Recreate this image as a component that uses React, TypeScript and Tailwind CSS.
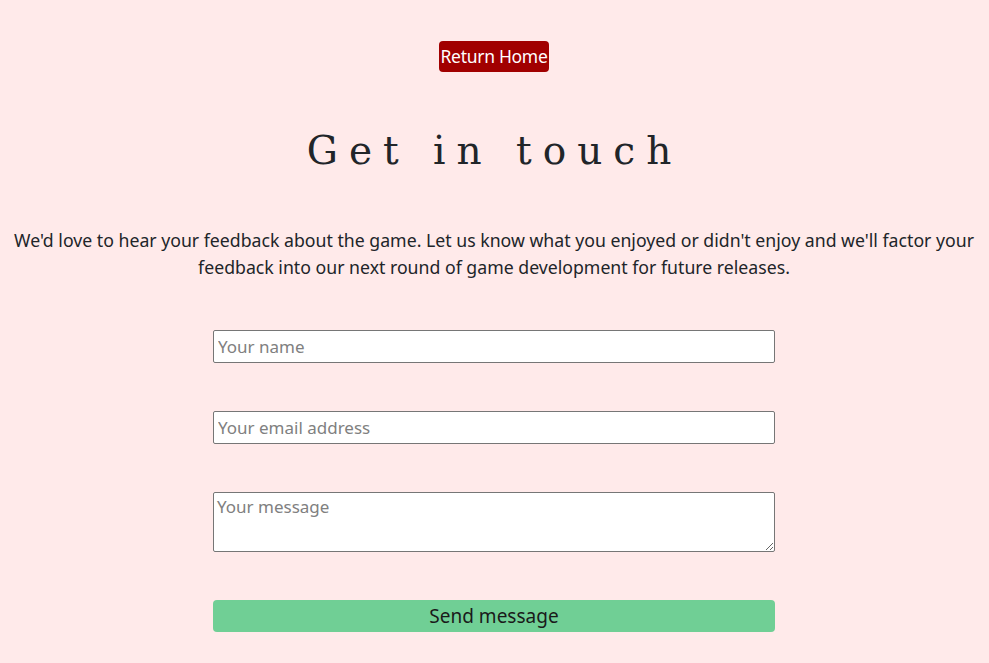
export default function App() {
  const fields = [
    { type: "text", placeholder: "Your name" },
    { type: "email", placeholder: "Your email address" },
  ];

  return (
    <div className="min-h-screen w-full bg-[#ffeaea] text-[#212529] font-['Noto_Sans',sans-serif]">
      <div className="flex flex-col items-center pt-[41px] pr-[1px]">
        <a
          href="#"
          className="rounded-[4px] bg-[#a10000] px-[2px] h-[31px] flex items-center text-[17.5px] text-white tracking-[-0.3px]"
        >
          Return Home
        </a>

        <h1 className="mt-[53px] text-[39px] leading-[52px] tracking-[11px] font-['DejaVu_Serif',serif] font-normal pl-[1px]">
          Get in touch
        </h1>

        <p className="mt-[50px] px-[10px] text-center text-[17.7px] leading-[27px]">
          We'd love to hear your feedback about the game. Let us know what you
          enjoyed or didn't enjoy and we'll factor your feedback into our next
          round of game development for future releases.
        </p>

        <form className="mt-[49px] w-[562px] flex flex-col gap-[48px]">
          {fields.map((f, i) => (
            <input
              key={i}
              type={f.type}
              placeholder={f.placeholder}
              className="h-[33px] w-full bg-white border border-[#767676] rounded-[2px] px-[4px] text-[17px] placeholder:text-[#808080] outline-none"
            />
          ))}
          <textarea
            placeholder="Your message"
            className="h-[60px] w-full bg-white border border-[#767676] rounded-[2px] px-[3px] pt-[2px] text-[17px] leading-[24px] placeholder:text-[#808080] outline-none"
          />
          <button
            type="button"
            className="h-[32px] w-full rounded-[4px] bg-[#70cf95] text-[19px] text-[#1a1a1a]"
          >
            Send message
          </button>
        </form>
      </div>
    </div>
  );
}
